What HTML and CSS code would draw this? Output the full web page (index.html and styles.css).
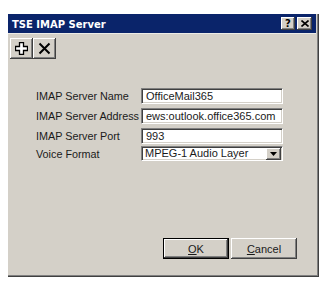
FILE: index.html
```html
<!DOCTYPE html>
<html>
<head>
<meta charset="utf-8">
<link rel="stylesheet" href="styles.css">
</head>
<body>
<div class="dialog">
  <div class="titlebar">
    <span class="title">TSE IMAP Server</span>
    <div class="caption-btns">
      <span class="cbtn help">?</span>
      <span class="cbtn close"><svg width="8" height="7" viewBox="0 0 8 7"><path d="M0.5 0.5 L7.5 6.5 M7.5 0.5 L0.5 6.5" stroke="#000" stroke-width="1.6"/></svg></span>
    </div>
  </div>
  <div class="toolbar">
    <span class="tbtn"><svg width="13" height="13" viewBox="0 0 13 13"><polygon points="4.5,0.5 8.5,0.5 8.5,4.5 12.5,4.5 12.5,8.5 8.5,8.5 8.5,12.5 4.5,12.5 4.5,8.5 0.5,8.5 0.5,4.5 4.5,4.5" fill="#fff" stroke="#000" stroke-width="1.3"/></svg></span>
    <span class="tbtn"><svg width="13" height="13" viewBox="0 0 13 13"><path d="M1.5 1.5 L11.5 11.5 M11.5 1.5 L1.5 11.5" stroke="#000" stroke-width="2"/></svg></span>
  </div>
  <div class="form">
    <span class="label">IMAP Server Name</span>
    <span class="field">OfficeMail365</span>
    <span class="label">IMAP Server Address</span>
    <span class="field">ews:outlook.office365.com</span>
    <span class="label">IMAP Server Port</span>
    <span class="field">993</span>
    <span class="label">Voice Format</span>
    <span class="field select"><span class="sel-text">MPEG-1 Audio Layer</span><span class="arrow"><svg width="7" height="4" viewBox="0 0 7 4"><polygon points="0,0 7,0 3.5,4" fill="#000"/></svg></span></span>
  </div>
  <div class="actions">
    <span class="btn default"><u>O</u>K</span>
    <span class="btn"><u>C</u>ancel</span>
  </div>
</div>
</body>
</html>
```
FILE: styles.css
```css
html, body {
  margin: 0;
  background: #fff;
}
body {
  font-family: "Liberation Sans", Arial, sans-serif;
  font-size: 10.8px;
  color: #1a1a1a;
}
.dialog {
  box-sizing: border-box;
  margin: 14px 0 0 8px;
  width: 311px;
  height: 263px;
  padding-right: 2px;
  background: #d4d0c8;
  border-right: 1px solid #404040;
  border-bottom: 1px solid #404040;
  box-shadow: inset -1px -1px #808080;
  display: flex;
  flex-direction: column;
}
.titlebar {
  height: 19px;
  background: #0a246a;
  display: flex;
  align-items: center;
  padding: 0 4px 0 4px;
  border-bottom: 1px solid #ecebe6;
}
.title {
  color: #fff;
  font-family: "DejaVu Sans", Verdana, sans-serif;
  font-weight: bold;
  font-size: 10px;
  padding-top: 1px;
}
.caption-btns {
  margin-left: auto;
  display: flex;
  gap: 2px;
}
.cbtn {
  box-sizing: border-box;
  height: 13px;
  display: flex;
  align-items: center;
  justify-content: center;
  background: #d4d0c8;
  box-shadow: inset -1px -1px #404040, inset 1px 1px #fff, inset -2px -2px #808080;
}
.help {
  width: 14px;
  font-family: "DejaVu Sans", sans-serif;
  font-weight: bold;
  font-size: 10px;
  line-height: 13px;
  color: #000;
}
.close {
  width: 15px;
}
.toolbar {
  display: flex;
  padding: 4px 0 0 2px;
}
.tbtn {
  box-sizing: border-box;
  width: 23px;
  height: 21px;
  display: flex;
  align-items: center;
  justify-content: center;
  background: #d4d0c8;
  box-shadow: inset -1px -1px #404040, inset 1px 1px #fff, inset -2px -2px #808080;
}
.form {
  margin-top: 29px;
  padding-left: 28px;
  display: grid;
  grid-template-columns: 105px 142px;
  grid-template-rows: 20px 20px 18px 16px;
  align-items: start;
}
.label {
  line-height: 16px;
  white-space: nowrap;
}
.field {
  box-sizing: border-box;
  height: 16px;
  background: #fff;
  border: 1px solid;
  border-color: #808080 #fff #fff #808080;
  box-shadow: inset 1px 1px #404040, inset -1px -1px #d4d0c8;
  padding-left: 4px;
  line-height: 14px;
  font-size: 11px;
  white-space: nowrap;
  overflow: hidden;
}
.select {
  height: 15px;
  display: flex;
  align-items: center;
  padding-left: 3px;
  padding-right: 1px;
}
.sel-text {
  flex: 1;
  line-height: 13px;
}
.arrow {
  box-sizing: border-box;
  width: 15px;
  height: 12px;
  margin-top: 1px;
  display: flex;
  align-items: center;
  justify-content: center;
  background: #d4d0c8;
  box-shadow: inset -1px -1px #404040, inset 1px 1px #fff, inset -2px -2px #808080;
}
.actions {
  margin-top: auto;
  display: flex;
  justify-content: flex-end;
  gap: 2px;
  padding: 0 19px 17px 0;
}
.btn {
  box-sizing: border-box;
  width: 66px;
  height: 21px;
  display: flex;
  align-items: center;
  justify-content: center;
  background: #d4d0c8;
  font-size: 11px;
  box-shadow: inset -1px -1px #404040, inset 1px 1px #fff, inset -2px -2px #808080;
}
.btn.default {
  border: 1px solid #000;
}
```
